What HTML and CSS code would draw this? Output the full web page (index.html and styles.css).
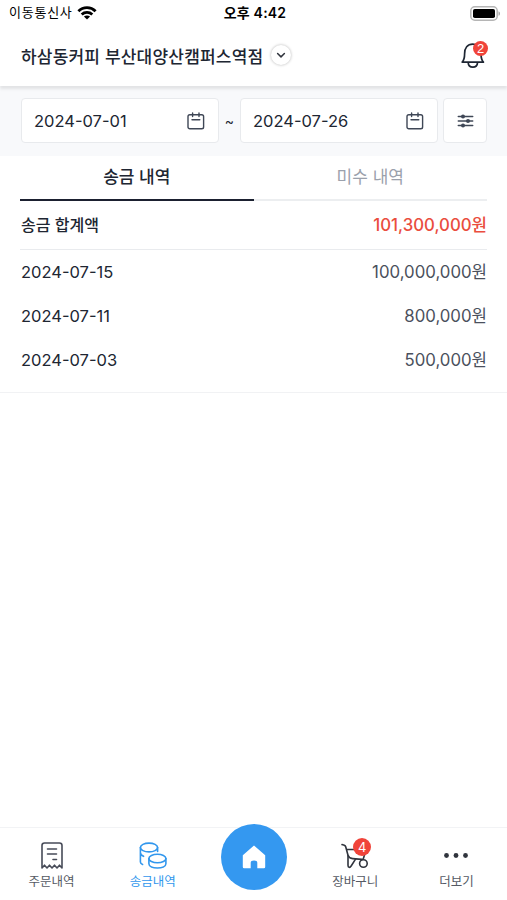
FILE: index.html
```html
<!DOCTYPE html>
<html lang="ko">
<head>
  <meta charset="UTF-8">
  <meta name="viewport" content="width=device-width, initial-scale=1.0">
  <title>송금내역</title>
  <link rel="stylesheet" href="styles.css">
</head>
<body>
  <div class="status-bar">
    <div class="carrier">
      <span class="carrier-name">이동통신사</span>
      <svg width="20" height="14" viewBox="0 0 20 14" fill="none" stroke="#000" stroke-width="2.8">
        <path d="M1.4 5.2C6.2.5 13.8.5 18.6 5.2"/>
        <path d="M4.7 8.5c3-2.8 7.6-2.8 10.6 0"/>
        <path d="M10 13.6l-3.1-3.1c1.7-1.5 4.5-1.5 6.2 0z" fill="#000" stroke="none"/>
      </svg>
    </div>
    <span class="time">오후 4:42</span>
    <svg class="battery" width="31" height="15" viewBox="0 0 31 15">
      <rect x=".8" y=".8" width="26.4" height="13.4" rx="4" fill="#fff" stroke="#b5b5b5" stroke-width="1.5"/>
      <rect x="3" y="3" width="22" height="9" rx="1.8" fill="#000"/>
      <path d="M28.5 5.2c2 .8 2 3.8 0 4.6z" fill="#aaa"/>
    </svg>
  </div>

  <header class="header">
    <h1>하삼동커피 부산대양산캠퍼스역점</h1>
    <button class="store-btn">
      <svg width="10" height="7" viewBox="0 0 10 7" fill="none" stroke="#30343d" stroke-width="1.5" stroke-linecap="round" stroke-linejoin="round"><path d="M1.6 1.5L5 4.9l3.4-3.4"/></svg>
    </button>
    <button class="bell">
      <svg width="26" height="28" viewBox="0 0 26 28" fill="none" stroke="#1e2633" stroke-width="1.7" stroke-linejoin="round">
        <path d="M2.2 21.2h21.2c-1.8-1.9-2.4-4.4-2.4-8.4 0-5.8-2.8-9.600-8.200-9.600s-8.200 3.800-8.200 9.600c0 4-.6 6.500-2.400 8.400z"/>
        <path d="M8.200 21.600c.3 6.100 9 6.100 9.300 0"/>
      </svg>
      <span class="badge">2</span>
    </button>
  </header>

  <section class="filter">
    <div class="date-box">
      <span>2024-07-01</span>
      <svg width="18" height="18" viewBox="0 0 18 18" fill="none" stroke="#3f4756" stroke-width="1.4" stroke-linecap="round"><rect x="1" y="2.8" width="15.6" height="14" rx="1.8"/><path d="M5.600 1v3.600M12 1v3.600M5 7.800h7.800"/></svg>
    </div>
    <span class="tilde">~</span>
    <div class="date-box">
      <span>2024-07-26</span>
      <svg width="18" height="18" viewBox="0 0 18 18" fill="none" stroke="#3f4756" stroke-width="1.4" stroke-linecap="round"><rect x="1" y="2.8" width="15.6" height="14" rx="1.8"/><path d="M5.600 1v3.600M12 1v3.600M5 7.800h7.800"/></svg>
    </div>
    <button class="option-btn">
      <svg width="17" height="16" viewBox="0 0 17 16" fill="none" stroke="#3f4756" stroke-width="1.5" stroke-linecap="round">
        <path d="M1.300 3.400h14.400M1.300 8h14.400M1.300 12.600h14.400"/>
        <g fill="#3f4756" stroke="none"><circle cx="6" cy="3.400" r="2"/><circle cx="11" cy="8" r="2"/><circle cx="6" cy="12.600" r="2"/></g>
      </svg>
    </button>
  </section>

  <main>
    <nav class="tabs">
      <a class="tab active">송금 내역</a>
      <a class="tab">미수 내역</a>
    </nav>
    <div class="total">
      <span>송금 합계액</span>
      <span class="total-price">101,300,000원</span>
    </div>
    <ul class="list">
      <li><span>2024-07-15</span><span class="price">100,000,000원</span></li>
      <li><span>2024-07-11</span><span class="price">800,000원</span></li>
      <li><span>2024-07-03</span><span class="price">500,000원</span></li>
    </ul>
  </main>

  <nav class="bottom-nav">
    <a class="nav-item">
      <span class="nav-icon">
        <svg width="24" height="28" viewBox="0 0 24 28" fill="none" stroke="#474b58" stroke-width="1.6" stroke-linejoin="round" stroke-linecap="round">
          <path d="M2 26V3.500Q2 1 4.500 1h15Q22 1 22 3.500V26l-2.500-2.800L17 26l-2.500-2.800L12 26l-2.500-2.800L7 26l-2.500-2.800z"/>
          <path d="M7.500 7h9M7.500 12h9M13 17.500h3.500"/>
        </svg>
      </span>
      주문내역
    </a>
    <a class="nav-item on">
      <span class="nav-icon">
        <svg width="28" height="28" viewBox="0 0 28 28" fill="none" stroke="#3297ed" stroke-width="1.6" stroke-linecap="round">
          <ellipse cx="10" cy="5.500" rx="8.600" ry="4.400"/>
          <path d="M1.400 5.500v5c0 1.800 1.200 3 3.200 3.800M1.400 10.500v5.200M1.400 15.700v4.200c0 1 .8 1.900 2.200 2.500M18.600 5.500v4"/>
          <ellipse cx="18.400" cy="16.500" rx="8.500" ry="4.300"/>
          <path d="M9.900 16.500v5.200c0 5.700 17 5.700 17 0v-5.200"/>
        </svg>
      </span>
      송금내역
    </a>
    <a class="home">
      <svg width="24" height="24" viewBox="0 0 24 24" fill="#fff"><path d="M12 .5l11.200 9.800V22q0 1.300-1.300 1.300h-6.600v-5.500q0-2.300-3.300-2.300t-3.300 2.300v5.500H2.100Q.8 23.300.8 22V10.300z"/></svg>
    </a>
    <a class="nav-item">
      <span class="nav-icon">
        <svg width="30" height="28" viewBox="0 0 30 28" fill="none" stroke="#30343d" stroke-width="1.6" stroke-linecap="round" stroke-linejoin="round">
          <path d="M2 2.600l2.300.6c.8.300 1.200.8 1.400 1.600l2.300 8.500M6.500 7.500H26l-2.500 8.700q-.4 1.200-1.600 1.200l-9.300-.8q-3.600-.3-4.600-3.300"/>
          <path d="M8 13.500v9.800c0 2.400 2 2.700 3 .9l4.700-7.300"/>
          <circle cx="23.400" cy="21.500" r="3.800"/>
        </svg>
        <span class="badge cart-badge">4</span>
      </span>
      장바구니
    </a>
    <a class="nav-item">
      <span class="nav-icon">
        <svg width="24" height="28" viewBox="0 0 24 28" fill="#30343d"><circle cx="2.500" cy="13.500" r="2.400"/><circle cx="12" cy="13.500" r="2.400"/><circle cx="21.500" cy="13.500" r="2.400"/></svg>
      </span>
      더보기
    </a>
  </nav>
</body>
</html>
```

FILE: styles.css
```css
* {
  box-sizing: border-box;
}
body {
  margin: 0;
  height: 100vh;
  display: flex;
  flex-direction: column;
  overflow: hidden;
  font-family: Inter, "Noto Sans CJK KR", sans-serif;
  color: #202632;
  background: #fff;
}
button {
  padding: 0;
  border: none;
  background: none;
}
svg {
  display: block;
}

/* 상태바 */
.status-bar {
  height: 26px;
  padding: 0 6px 0 9px;
  display: grid;
  grid-template-columns: 1fr auto 1fr;
  align-items: center;
  font-size: 13px;
  color: #000;
}
.carrier {
  display: flex;
  align-items: center;
  gap: 4px;
}
.carrier-name {
  letter-spacing: 0.75px;
  line-height: 24px;
  padding-bottom: 2px;
}
.time {
  font-size: 14px;
  font-weight: 600;
  line-height: 24px;
  letter-spacing: 0.2px;
  padding-bottom: 1px;
}
.battery {
  justify-self: end;
}

/* 헤더 */
.header {
  height: 60px;
  padding: 0 20px 2px 21px;
  display: flex;
  align-items: center;
  position: relative;
  box-shadow: 0 3px 3px rgba(0, 0, 0, 0.09);
}
.header h1 {
  margin: 0;
  font-size: 17px;
  font-weight: 500;
  letter-spacing: 0.2px;
  white-space: nowrap;
}
.store-btn {
  width: 20px;
  height: 20px;
  margin-left: 8px;
  display: flex;
  align-items: center;
  justify-content: center;
  border-radius: 50%;
  box-shadow: 0 0 3px rgba(0, 0, 0, 0.3);
}
.bell {
  position: relative;
  margin-left: auto;
  margin-right: 1px;
}
.badge {
  position: absolute;
  top: 0;
  right: -2px;
  width: 15px;
  height: 15px;
  border-radius: 50%;
  background: #f0443a;
  color: #fff;
  font-size: 13px;
  line-height: 15px;
  text-align: center;
}

/* 날짜 검색 */
.filter {
  height: 70px;
  padding: 12px 20px 0 21px;
  display: flex;
  background: #f8f9fb;
}
.date-box {
  width: 198px;
  height: 45px;
  padding: 0 13px 0 12px;
  display: flex;
  align-items: center;
  justify-content: space-between;
  border: 1px solid #e8eaed;
  border-radius: 4px;
  background: #fff;
  font-size: 16.5px;
}
.tilde {
  width: 21px;
  line-height: 45px;
  text-align: center;
  font-size: 14px;
}
.option-btn {
  width: 44px;
  height: 45px;
  margin-left: 5px;
  display: flex;
  align-items: center;
  justify-content: center;
  border: 1px solid #e8eaed;
  border-radius: 4px;
  background: #fff;
}

/* 내역 */
main {
  flex: 1;
}
.tabs {
  height: 45px;
  margin: 0 20px;
  display: flex;
}
.tab {
  flex: 1;
  line-height: 42px;
  text-align: center;
  font-size: 17px;
  color: #9ba1ac;
  border-bottom: 2px solid #eceef0;
}
.tab.active {
  font-weight: 500;
  color: #202632;
  border-bottom-color: #1b2030;
}
.total {
  height: 49px;
  margin: 0 20px;
  padding: 0 0 2px 1px;
  display: flex;
  align-items: center;
  justify-content: space-between;
  border-bottom: 1px solid #e9ebee;
  font-size: 16px;
  font-weight: 500;
}
.total-price {
  font-size: 16.8px;
  color: #ea4d3e;
}
.list {
  margin: 0;
  padding: 0 20px 10px 21px;
  list-style: none;
  border-bottom: 1px solid #f1f2f4;
}
.list li {
  height: 44px;
  display: flex;
  align-items: center;
  justify-content: space-between;
  font-size: 16.5px;
}
.price {
  padding-bottom: 2px;
  font-size: 16.8px;
  color: #4a505c;
}

/* 하단 메뉴 */
.bottom-nav {
  height: 73px;
  padding-left: 1px;
  display: grid;
  grid-template-columns: repeat(5, 1fr);
  justify-items: center;
  border-top: 1px solid #f2f3f5;
}
.nav-item {
  padding-top: 14px;
  font-size: 12.5px;
  line-height: 25px;
  text-align: center;
  color: #555a64;
}
.nav-item.on {
  color: #3297ed;
}
.nav-icon {
  position: relative;
  width: 30px;
  height: 27px;
  margin: 0 auto;
  display: flex;
  justify-content: center;
}
.cart-badge {
  top: -4px;
  right: -1px;
  width: 18px;
  height: 18px;
  font-size: 13px;
  line-height: 18px;
}
.home {
  width: 66px;
  height: 66px;
  margin-top: -4px;
  display: flex;
  align-items: center;
  justify-content: center;
  border-radius: 50%;
  background: #3498f0;
}
```
